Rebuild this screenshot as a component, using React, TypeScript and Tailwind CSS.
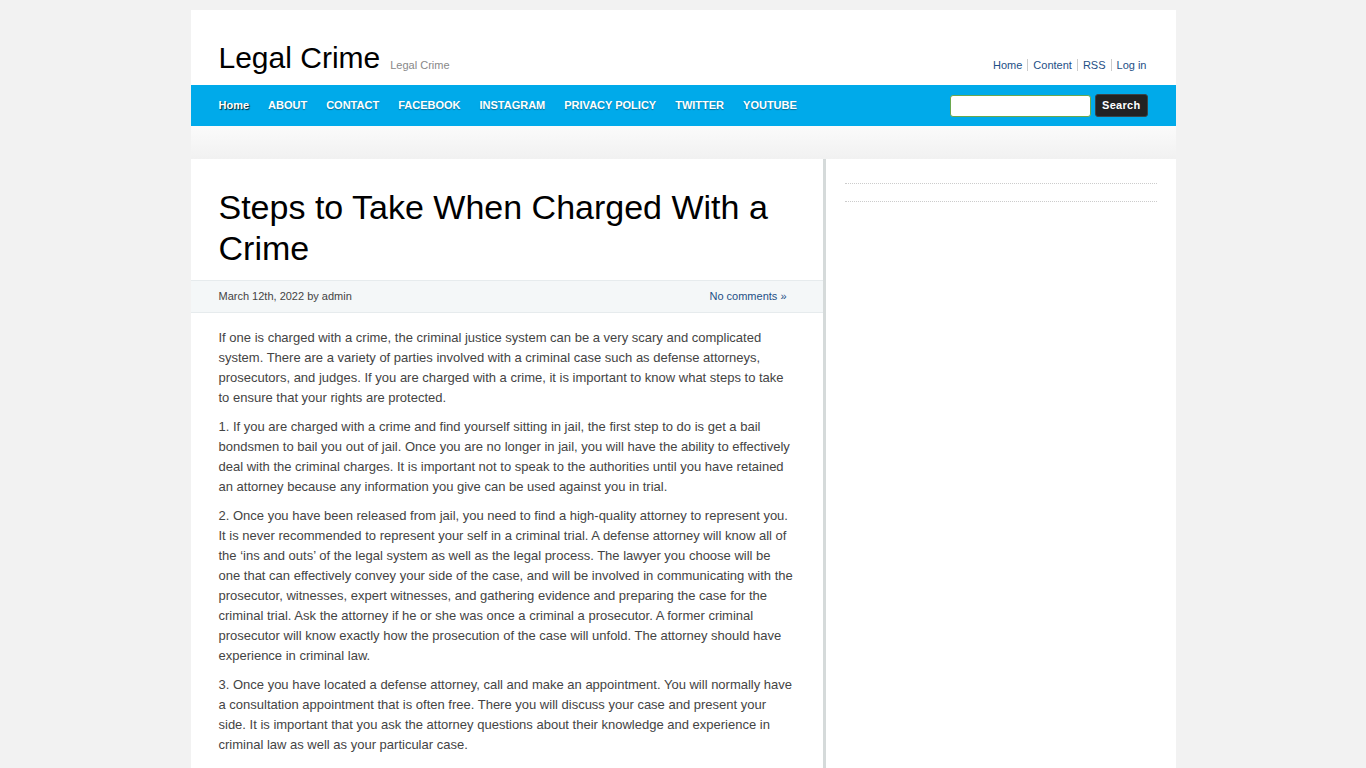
import React from "react";

const navItems = ["ABOUT", "CONTACT", "FACEBOOK", "INSTAGRAM", "PRIVACY POLICY", "TWITTER", "YOUTUBE"];
const topLinks = ["Home", "Content", "RSS", "Log in"];

const paragraphs = [
  "If one is charged with a crime, the criminal justice system can be a very scary and complicated system. There are a variety of parties involved with a criminal case such as defense attorneys, prosecutors, and judges. If you are charged with a crime, it is important to know what steps to take to ensure that your rights are protected.",
  "1. If you are charged with a crime and find yourself sitting in jail, the first step to do is get a bail bondsmen to bail you out of jail. Once you are no longer in jail, you will have the ability to effectively deal with the criminal charges. It is important not to speak to the authorities until you have retained an attorney because any information you give can be used against you in trial.",
  "2. Once you have been released from jail, you need to find a high-quality attorney to represent you. It is never recommended to represent your self in a criminal trial. A defense attorney will know all of the \u2018ins and outs\u2019 of the legal system as well as the legal process. The lawyer you choose will be one that can effectively convey your side of the case, and will be involved in communicating with the prosecutor, witnesses, expert witnesses, and gathering evidence and preparing the case for the criminal trial. Ask the attorney if he or she was once a criminal a prosecutor. A former criminal prosecutor will know exactly how the prosecution of the case will unfold. The attorney should have experience in criminal law.",
  "3. Once you have located a defense attorney, call and make an appointment. You will normally have a consultation appointment that is often free. There you will discuss your case and present your side. It is important that you ask the attorney questions about their knowledge and experience in criminal law as well as your particular case.",
];

export default function App() {
  return (
    <div className="min-h-screen bg-[#f2f2f2] pt-[10px] font-['Liberation_Sans',Arial,sans-serif]">
      <div className="mx-auto w-[985px]">
        {/* header */}
        <header className="flex h-[75px] items-end justify-between bg-white pb-[12px] pl-[28px] pr-[29px]">
          <div className="flex items-baseline gap-[10px]">
            <h1 className="text-[30px] leading-none text-black">Legal Crime</h1>
            <span className="relative top-[1px] text-[11px] text-[#888]">Legal Crime</span>
          </div>
          <div className="flex items-center text-[11px] text-[#1e4f86]">
            {topLinks.map((l, i) => (
              <React.Fragment key={l}>
                {i > 0 && <span className="mx-[5px] h-[12px] w-px bg-[#ccc]" />}
                <a>{l}</a>
              </React.Fragment>
            ))}
          </div>
        </header>

        {/* nav */}
        <nav className="flex h-[41px] items-center justify-between bg-[#00aaea] pl-[28px] pr-[28px]">
          <ul className="flex items-center gap-[19px] text-[11px] font-bold text-white [text-shadow:0_1px_1px_rgba(0,0,0,0.35)]">
            <li className="[text-shadow:1px_1px_1px_rgba(0,0,0,0.8)]">Home</li>
            {navItems.map((n) => (
              <li key={n}>{n}</li>
            ))}
          </ul>
          <div className="flex items-center gap-[4px]">
            <input className="h-[22px] w-[141px] rounded-[3px] border border-[#6aa84f] bg-white" />
            <button className="h-[23px] rounded-[3px] border border-[#3a4448] bg-[#222] px-[6px] text-[11px] font-bold tracking-[0.3px] text-white">
              Search
            </button>
          </div>
        </nav>

        <div className="h-[33px] bg-gradient-to-b from-[#fbfbfb] to-[#f1f1f1]" />

        {/* content */}
        <div className="flex">
          <main className="w-[635px] border-r-[3px] border-[#d5dada] bg-white">
            <h2 className="px-[28px] pb-[11px] pt-[28px] text-[34px] leading-[41px] text-black">
              Steps to Take When Charged With a Crime
            </h2>
            <div className="flex h-[33px] items-center justify-between border-y border-[#e6ebed] bg-[#f4f7f8] pl-[28px] pr-[36px] text-[11px]">
              <span className="text-[#444]">March 12th, 2022 by admin</span>
              <a className="text-[#1e4f86]">No comments &raquo;</a>
            </div>
            <div className="pb-[24px] pl-[28px] pr-[28px] pt-[15px] text-[13px] leading-[20px] text-[#444]">
              {paragraphs.map((p, i) => (
                <p key={i} className="mb-[9px]">
                  {p}
                </p>
              ))}
            </div>
          </main>
          <aside className="flex-1 bg-white px-[19px] pt-[7px]">
            <div className="h-[18px] border-b border-dotted border-[#ccc]" />
            <div className="h-[18px] border-b border-dotted border-[#ccc]" />
          </aside>
        </div>
      </div>
    </div>
  );
}
